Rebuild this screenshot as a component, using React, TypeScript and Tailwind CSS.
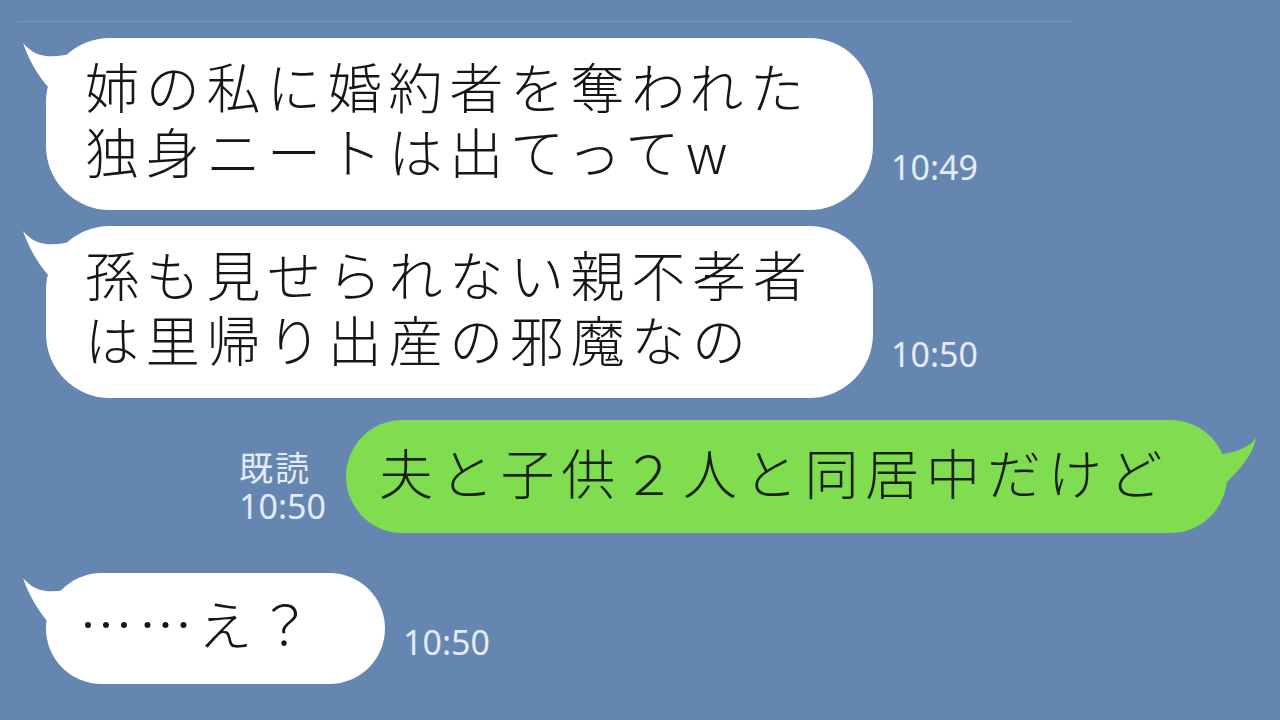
import type { ReactNode } from 'react'

// Chat log: incoming messages are white with a tail on the left,
// outgoing ones are green with a tail on the right.

const cjk = "font-['Noto_Sans_CJK_JP','Noto_Sans_CJK_SC',sans-serif] font-light"
const meta = "font-['Noto_Sans','Noto_Sans_CJK_JP',sans-serif] text-[34px] text-[#e4ebf4]"

function LeftTail() {
  return (
    <svg
      className="absolute left-[-26px] top-0"
      width="110"
      height="64"
      viewBox="0 0 110 64"
    >
      <path
        d="M3 5 C 22 28, 50 18, 96 0 L 96 64 L 29 64 L 29 50 C 18 38, 8 20, 3 5 Z"
        fill="#ffffff"
      />
    </svg>
  )
}

function RightTail() {
  return (
    <svg
      className="absolute right-[-38px] top-0"
      width="60"
      height="70"
      viewBox="0 0 60 70"
    >
      <path
        d="M4 36 C 24 34, 42 30, 51 18 C 48 34, 36 48, 22 62 L 4 62 Z"
        fill="#80dd50"
      />
    </svg>
  )
}

function Incoming({
  width,
  height,
  radius,
  time,
  timeGap,
  children,
}: {
  width: string
  height: string
  radius: string
  time: string
  timeGap: string
  children: ReactNode
}) {
  return (
    <div className="flex items-end">
      <div className={`relative ml-[46px] ${width} ${height}`}>
        <LeftTail />
        <div
          className={`relative flex h-full w-full flex-col justify-center bg-white pb-[12px] pl-[39px] ${radius}`}
        >
          {children}
        </div>
      </div>
      <div className={`ml-[18px] leading-[34px] ${timeGap} ${meta}`}>{time}</div>
    </div>
  )
}

export default function App() {
  return (
    <div className="relative h-[720px] w-[1280px] overflow-hidden bg-[#6486b1]">
      <div className="ml-[18px] mt-[21px] h-px w-[1054px] bg-[#6e9fa9]" />

      <div className="mt-[16px]">
        <Incoming
          width="w-[827px]"
          height="h-[172px]"
          radius="rounded-[64px]"
          time="10:49"
          timeGap="mb-[26px]"
        >
          <p className={`${cjk} text-[54px] leading-[65px] tracking-[6.7px] text-[#161616]`}>
            姉の私に婚約者を奪われた
            <br />
            独身ニートは出てってw
          </p>
        </Incoming>
      </div>

      <div className="mt-[16px]">
        <Incoming
          width="w-[827px]"
          height="h-[172px]"
          radius="rounded-[64px]"
          time="10:50"
          timeGap="mb-[27px]"
        >
          <p className={`${cjk} text-[54px] leading-[65px] tracking-[6.7px] text-[#161616]`}>
            孫も見せられない親不孝者
            <br />
            は里帰り出産の邪魔なの
          </p>
        </Incoming>
      </div>

      {/* outgoing message with read receipt */}
      <div className="mt-[22px] flex items-end pl-[239px]">
        <div className="mb-[8px] flex flex-col">
          <span className={`${meta} text-[32px] leading-[38px] tracking-[2px]`}>既読</span>
          <span className={`${meta} leading-[38px]`}>10:50</span>
        </div>
        <div className="relative ml-[20px] h-[113px] w-[881px]">
          <RightTail />
          <div className="relative flex h-full w-full items-center rounded-[57px] bg-[#80dd50] pb-[10px] pl-[33px]">
            <p className={`${cjk} text-[54px] leading-[65px] tracking-[6.8px] text-[#18220f]`}>
              夫と子供２人と同居中だけど
            </p>
          </div>
        </div>
      </div>

      <div className="mt-[40px]">
        <Incoming
          width="w-[339px]"
          height="h-[111px]"
          radius="rounded-[56px]"
          time="10:50"
          timeGap="mb-[25px]"
        >
          <p className={`${cjk} -ml-[6px] text-[54px] leading-[65px] tracking-[5.6px] text-[#161616]`}>
            ……え？
          </p>
        </Incoming>
      </div>
    </div>
  )
}
